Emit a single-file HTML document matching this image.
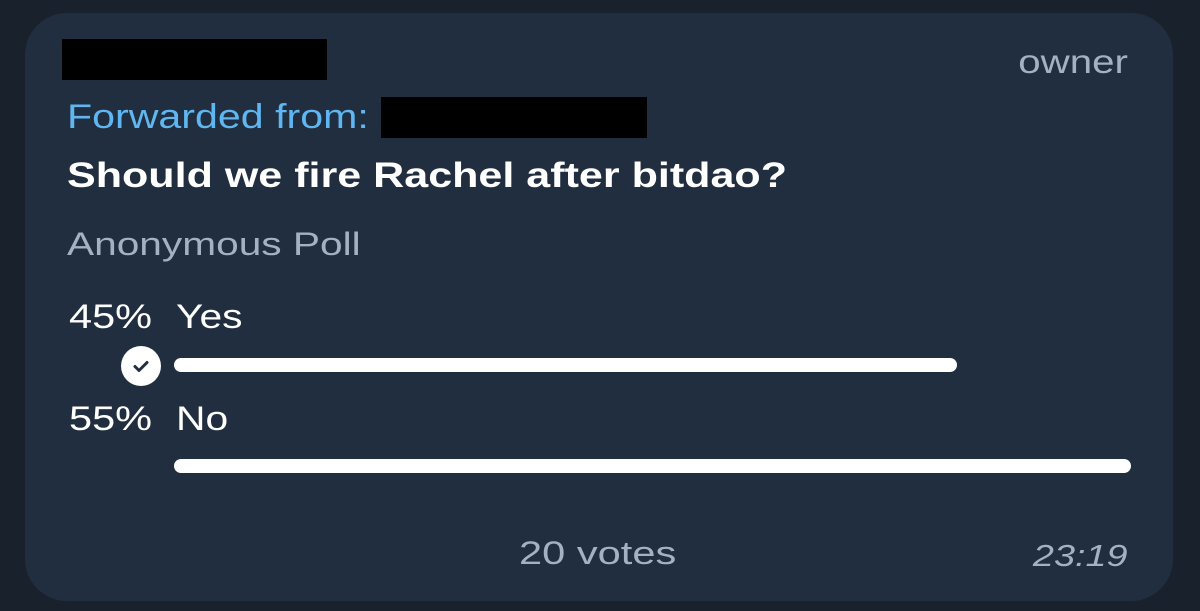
<!DOCTYPE html>
<html><head><style>
html,body{margin:0;padding:0;width:1200px;height:611px;background:#19222c;overflow:hidden;font-family:"Liberation Sans",sans-serif}
.b{position:absolute;left:25px;top:13px;width:1148px;height:588px;background:#212e3f;border-radius:42px}
.t{position:absolute;white-space:nowrap;line-height:1;transform-origin:left top}
.r{transform-origin:right top}
.blk{position:absolute;background:#000}
.bar{position:absolute;height:14px;background:#fff;border-radius:7px}
</style></head><body>
<div class="b"></div>
<div class="blk" style="left:62px;top:39px;width:265px;height:41px"></div>
<div class="t r" style="right:72px;top:45px;font-size:33px;color:#a4b1c0;transform:scaleX(1.22)">owner</div>
<div class="t" style="left:67px;top:100px;font-size:34px;color:#5fb6f0;transform:scaleX(1.21)">Forwarded from:</div>
<div class="blk" style="left:381px;top:97px;width:266px;height:41px"></div>
<div class="t" style="left:67px;top:158px;font-size:35px;font-weight:bold;color:#fff;transform:scaleX(1.23)">Should we fire Rachel after bitdao?</div>
<div class="t" style="left:67px;top:228px;font-size:32px;color:#a4b1c0;transform:scaleX(1.27)">Anonymous Poll</div>
<div class="t" style="left:69px;top:300px;font-size:34px;color:#fff;transform:scaleX(1.22)">45%</div>
<div class="t" style="left:176px;top:300px;font-size:34px;color:#fff;transform:scaleX(1.2)">Yes</div>
<div style="position:absolute;left:121px;top:346px;width:40px;height:40px;border-radius:50%;background:#fff"></div>
<svg style="position:absolute;left:121px;top:346px" width="40" height="40"><path d="M14 20.5l4 4 8-8" fill="none" stroke="#212e3f" stroke-width="3" stroke-linecap="round" stroke-linejoin="round"/></svg>
<div class="bar" style="left:174px;top:358px;width:783px"></div>
<div class="t" style="left:69px;top:402px;font-size:34px;color:#fff;transform:scaleX(1.22)">55%</div>
<div class="t" style="left:176px;top:402px;font-size:34px;color:#fff;transform:scaleX(1.2)">No</div>
<div class="bar" style="left:174px;top:459px;width:957px"></div>
<div class="t" style="left:519px;top:537px;font-size:32px;color:#a4b1c0;transform:scaleX(1.3)">20 votes</div>
<div class="t r" style="right:72px;top:540px;font-size:31px;font-style:italic;color:#a4b1c0;transform:scaleX(1.22)">23:19</div>
</body></html>
